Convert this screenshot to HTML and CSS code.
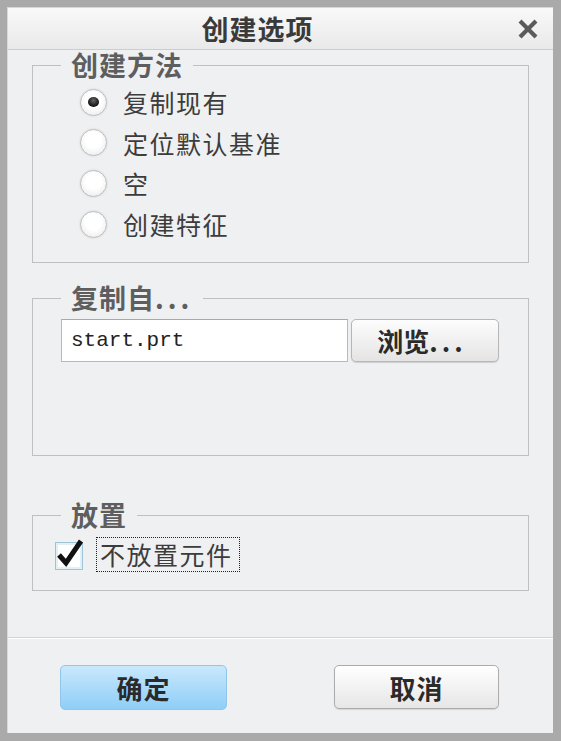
FILE: index.html
```html
<!DOCTYPE html>
<html lang="zh-CN">
<head>
    <meta charset="UTF-8">
    <meta name="viewport" content="width=device-width, initial-scale=1.0">
    <title>创建选项</title>
    <link rel="stylesheet" href="styles.css">
</head>
<body>
    <div class="window">
        <div class="inner">
            <div class="titlebar">
                <div class="title">创建选项</div>
                <div class="close">
                    <svg width="20" height="20" viewBox="0 0 20 20">
                        <path d="M3.5 3.5 L16.5 16.5 M16.5 3.5 L3.5 16.5" stroke="#5a5a5a" stroke-width="4.2" stroke-linecap="square" fill="none"/>
                    </svg>
                </div>
            </div>

            <div class="content">
                <fieldset class="group group-method">
                    <legend>创建方法</legend>
                    <label class="radio-row"><span class="radio checked"></span>复制现有</label>
                    <label class="radio-row"><span class="radio"></span>定位默认基准</label>
                    <label class="radio-row"><span class="radio"></span>空</label>
                    <label class="radio-row"><span class="radio"></span>创建特征</label>
                </fieldset>

                <fieldset class="group group-copy">
                    <legend>复制自<span class="dots">...</span></legend>
                    <div class="file-row">
                        <div class="file-input">start.prt</div>
                        <button class="btn browse">浏览<span class="dots">...</span></button>
                    </div>
                </fieldset>

                <fieldset class="group group-place">
                    <legend>放置</legend>
                    <div class="check-row">
                        <span class="checkbox">
                            <svg width="32" height="36" viewBox="0 0 32 36">
                                <rect x="1.5" y="6.5" width="27" height="27" fill="#fff" stroke="#9cc3d6" stroke-width="1"/>
                                <rect x="3" y="8" width="24" height="24" fill="none" stroke="#d9ecf4" stroke-width="1.5"/>
                                <path d="M5 19 L12 27 L27 5" stroke="#111" stroke-width="5" fill="none" stroke-linejoin="miter"/>
                            </svg>
                        </span>
                        <span class="check-label">不放置元件</span>
                    </div>
                </fieldset>
            </div>

            <div class="footer">
                <button class="btn ok">确定</button>
                <button class="btn cancel">取消</button>
            </div>
        </div>
    </div>
</body>
</html>
```

FILE: styles.css
```css
* {
    box-sizing: border-box;
}
body {
    margin: 0;
    background: #a8a8a8;
    font-family: "Noto Sans CJK SC", "Liberation Sans", sans-serif;
}
.window {
    width: 561px;
    height: 741px;
    border: 7px solid #aaaaaa;
    border-right-width: 8px;
    border-bottom-width: 8px;
    padding: 1px 0 0 1px;
    background: #d8d8d8;
}
.inner {
    height: 100%;
    display: flex;
    flex-direction: column;
    background: #eff0f2;
}
.titlebar {
    height: 42px;
    display: flex;
    align-items: center;
    background: linear-gradient(#f9f9f9, #e9e9e9);
    border-bottom: 1px solid #cdcdcd;
}
.title {
    flex: 1;
    text-align: center;
    font-size: 27px;
    font-weight: bold;
    color: #3a3a3a;
    letter-spacing: 1px;
    line-height: 30px;
}
.close {
    width: 46px;
    display: flex;
    justify-content: center;
    align-items: center;
    padding-right: 4px;
}
.content {
    flex: 1;
}
.group {
    margin: 0 24px;
    padding: 0 0 0 28px;
    border: 1px solid #c0c0c0;
    min-inline-size: 0;
}
.group legend {
    padding: 0 10px;
    font-size: 27px;
    line-height: 30px;
    font-weight: bold;
    color: #5e5e5e;
    letter-spacing: 1px;
}
.dots {
    letter-spacing: 4px;
}
.group-method {
    padding-top: 2px;
    padding-bottom: 18px;
}
.group-copy {
    margin-top: 20px;
    padding-top: 6px;
    padding-bottom: 93px;
}
.group-place {
    margin-top: 44px;
    padding-top: 7px;
    padding-bottom: 18px;
}
.radio-row {
    display: flex;
    align-items: center;
    height: 40.6px;
    padding-left: 19px;
    font-size: 25px;
    letter-spacing: 1.5px;
    color: #3c3c3c;
}
.radio {
    width: 27px;
    height: 27px;
    margin-right: 16px;
    border-radius: 50%;
    border: 1px solid #bdbdbd;
    background: radial-gradient(circle at 50% 40%, #ffffff 40%, #e6e6e6 100%);
    box-shadow: 0 0 2px #d0d0d0;
    display: flex;
    align-items: center;
    justify-content: center;
}
.radio.checked::after {
    content: "";
    width: 11px;
    height: 10px;
    border-radius: 50%;
    background: radial-gradient(circle at 50% 35%, #666, #111 70%);
}
.file-row {
    display: flex;
    gap: 3px;
    height: 43px;
}
.file-input {
    width: 287px;
    background: #fff;
    border: 1px solid #b9b9b9;
    border-top-color: #a9a9a9;
    padding-left: 9px;
    font-family: "Liberation Mono", monospace;
    font-size: 21px;
    line-height: 41px;
    color: #222;
}
.btn {
    font-family: "Noto Sans CJK SC", "Liberation Sans", sans-serif;
    font-weight: bold;
    color: #2a2a2a;
    border-radius: 5px;
    cursor: pointer;
    padding: 0;
}
.browse {
    width: 148px;
    font-size: 26px;
    padding-right: 6px;
    border: 1px solid #b7b7b7;
    background: linear-gradient(#fdfdfd, #e4e4e4);
    box-shadow: 0 1px 1px #cfcfcf;
}
.check-row {
    display: flex;
    align-items: center;
    height: 35px;
    margin-left: -7px;
}
.checkbox {
    width: 32px;
    height: 36px;
    margin-right: 10px;
    margin-top: -2px;
}
.check-label {
    border: 1px dotted #222;
    padding: 0 6px 0 3px;
    font-size: 25px;
    letter-spacing: 1.5px;
    line-height: 33px;
    color: #3c3c3c;
}
.footer {
    height: 96px;
    border-top: 1px solid #d2d2d2;
    box-shadow: inset 0 1px 0 #ffffff;
    display: flex;
    justify-content: space-between;
    align-items: flex-start;
    padding: 27px 54px 0 52px;
}
.ok,
.cancel {
    height: 45px;
    font-size: 26px;
    letter-spacing: 1px;
}
.ok {
    width: 167px;
    border: 1px solid #92c6e8;
    background: linear-gradient(#c9e8fc, #8fcef6);
}
.cancel {
    width: 165px;
    height: 44px;
    border: 1px solid #acacac;
    background: linear-gradient(#ffffff, #e6e6e6);
    box-shadow: 0 1px 1px #d4d4d4;
}
```
